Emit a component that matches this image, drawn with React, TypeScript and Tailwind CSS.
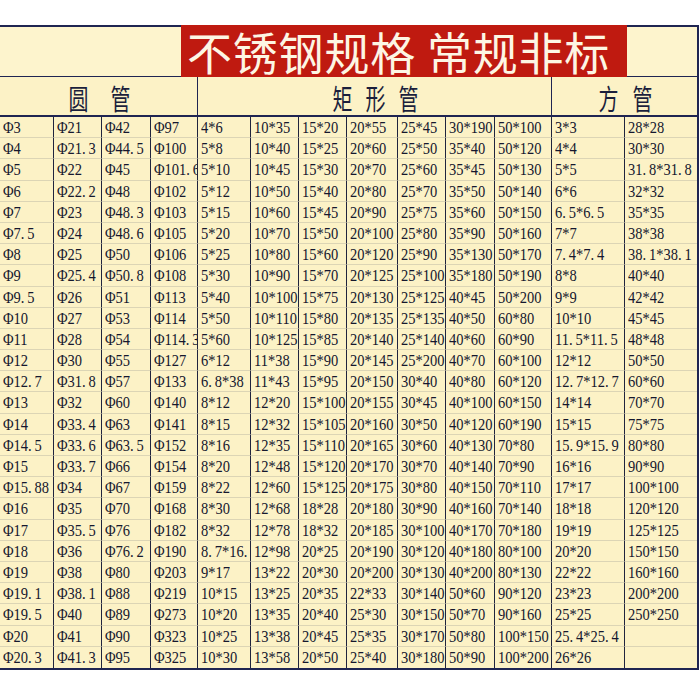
const round = [
  ["Φ3", "Φ4", "Φ5", "Φ6", "Φ7", "Φ7.5", "Φ8", "Φ9", "Φ9.5", "Φ10", "Φ11", "Φ12", "Φ12.7", "Φ13", "Φ14", "Φ14.5", "Φ15", "Φ15.88", "Φ16", "Φ17", "Φ18", "Φ19", "Φ19.1", "Φ19.5", "Φ20", "Φ20.3"],
  ["Φ21", "Φ21.3", "Φ22", "Φ22.2", "Φ23", "Φ24", "Φ25", "Φ25.4", "Φ26", "Φ27", "Φ28", "Φ30", "Φ31.8", "Φ32", "Φ33.4", "Φ33.6", "Φ33.7", "Φ34", "Φ35", "Φ35.5", "Φ36", "Φ38", "Φ38.1", "Φ40", "Φ41", "Φ41.3"],
  ["Φ42", "Φ44.5", "Φ45", "Φ48", "Φ48.3", "Φ48.6", "Φ50", "Φ50.8", "Φ51", "Φ53", "Φ54", "Φ55", "Φ57", "Φ60", "Φ63", "Φ63.5", "Φ66", "Φ67", "Φ70", "Φ76", "Φ76.2", "Φ80", "Φ88", "Φ89", "Φ90", "Φ95"],
  ["Φ97", "Φ100", "Φ101.6", "Φ102", "Φ103", "Φ105", "Φ106", "Φ108", "Φ113", "Φ114", "Φ114.3", "Φ127", "Φ133", "Φ140", "Φ141", "Φ152", "Φ154", "Φ159", "Φ168", "Φ182", "Φ190", "Φ203", "Φ219", "Φ273", "Φ323", "Φ325"],
];

const rect = [
  ["4*6", "5*8", "5*10", "5*12", "5*15", "5*20", "5*25", "5*30", "5*40", "5*50", "5*60", "6*12", "6.8*38", "8*12", "8*15", "8*16", "8*20", "8*22", "8*30", "8*32", "8.7*16.", "9*17", "10*15", "10*20", "10*25", "10*30"],
  ["10*35", "10*40", "10*45", "10*50", "10*60", "10*70", "10*80", "10*90", "10*100", "10*110", "10*125", "11*38", "11*43", "12*20", "12*32", "12*35", "12*48", "12*60", "12*68", "12*78", "12*98", "13*22", "13*25", "13*35", "13*38", "13*58"],
  ["15*20", "15*25", "15*30", "15*40", "15*45", "15*50", "15*60", "15*70", "15*75", "15*80", "15*85", "15*90", "15*95", "15*100", "15*105", "15*110", "15*120", "15*125", "18*28", "18*32", "20*25", "20*30", "20*35", "20*40", "20*45", "20*50"],
  ["20*55", "20*60", "20*70", "20*80", "20*90", "20*100", "20*120", "20*125", "20*130", "20*135", "20*140", "20*145", "20*150", "20*155", "20*160", "20*165", "20*170", "20*175", "20*180", "20*185", "20*190", "20*200", "22*33", "25*30", "25*35", "25*40"],
  ["25*45", "25*50", "25*60", "25*70", "25*75", "25*80", "25*90", "25*100", "25*125", "25*135", "25*140", "25*200", "30*40", "30*45", "30*50", "30*60", "30*70", "30*80", "30*90", "30*100", "30*120", "30*130", "30*140", "30*150", "30*170", "30*180"],
  ["30*190", "35*40", "35*45", "35*50", "35*60", "35*90", "35*130", "35*180", "40*45", "40*50", "40*60", "40*70", "40*80", "40*100", "40*120", "40*130", "40*140", "40*150", "40*160", "40*170", "40*180", "40*200", "50*60", "50*70", "50*80", "50*90"],
  ["50*100", "50*120", "50*130", "50*140", "50*150", "50*160", "50*170", "50*190", "50*200", "60*80", "60*90", "60*100", "60*120", "60*150", "60*190", "70*80", "70*90", "70*110", "70*140", "70*180", "80*100", "80*130", "90*120", "90*160", "100*150", "100*200"],
];

const square = [
  ["3*3", "4*4", "5*5", "6*6", "6.5*6.5", "7*7", "7.4*7.4", "8*8", "9*9", "10*10", "11.5*11.5", "12*12", "12.7*12.7", "14*14", "15*15", "15.9*15.9", "16*16", "17*17", "18*18", "19*19", "20*20", "22*22", "23*23", "25*25", "25.4*25.4", "26*26"],
  ["28*28", "30*30", "31.8*31.8", "32*32", "35*35", "38*38", "38.1*38.1", "40*40", "42*42", "45*45", "48*48", "50*50", "60*60", "70*70", "75*75", "80*80", "90*90", "100*100", "120*120", "125*125", "150*150", "160*160", "200*200", "250*250", "", ""],
];

const columns = [...round, ...rect, ...square];
const rowCount = 26;

// periods are half-width in the original sheet font, so give them room
const Cell = ({ text }: { text: string }) => {
  const parts = text.split(".");
  return (
    <span className="inline-block origin-center scale-y-[1.22]">
      {parts.map((p, i) => (
        <span key={i}>
          {p}
          {i < parts.length - 1 && <span className="inline-block w-[6.5px]">.</span>}
        </span>
      ))}
    </span>
  );
};

const HeadChars = ({ chars, gap }: { chars: string[]; gap: string }) => (
  <div className={`flex items-center justify-center ${gap}`}>
    {chars.map((c, i) => (
      <span key={i} className="inline-block w-[24px] text-center text-[25px] font-normal leading-none scale-x-[0.8] scale-y-[1.15] text-[#1b1f3c]">
        {c}
      </span>
    ))}
  </div>
);

export default function App() {
  const rows = Array.from({ length: rowCount }, (_, r) => columns.map((col) => col[r]));

  return (
    <div className="w-[700px] h-[700px] bg-white pt-[25px] font-['Liberation_Serif','Noto_Sans_CJK_SC',serif]">
      <div className="w-[699px] border-t-2 border-r-2 border-b-2 border-[#1f2552] bg-[#fcf2c6]">
        {/* title row with the red banner */}
        <div className="flex h-[50px] border-b-[1.5px] border-[#1f2552] bg-[#fdf4cd]">
          <div className="w-[181px]" />
          <div className="-mt-[2px] flex h-[52px] w-[446px] items-center bg-[#bf1a10] pl-[6px] font-['Noto_Sans_CJK_SC',sans-serif] text-[45px] font-normal leading-none tracking-[0.8px] text-[#fdf6e4]">
            不锈钢规格 常规非标
          </div>
        </div>

        {/* section headers */}
        <div className="grid h-[40px] grid-cols-[198px_354px_1fr] border-b-2 border-[#1f2552] font-['Noto_Sans_CJK_SC',sans-serif]">
          <div className="flex items-center justify-center border-r-[1.5px] border-[#1f2552] pt-[3px]">
            <HeadChars chars={["圆", "管"]} gap="gap-[18px]" />
          </div>
          <div className="flex items-center justify-center border-r-[1.5px] border-[#1f2552] pt-[3px]">
            <HeadChars chars={["矩", "形", "管"]} gap="gap-[9px]" />
          </div>
          <div className="flex items-center justify-center pt-[3px]">
            <HeadChars chars={["方", "管"]} gap="gap-[10px]" />
          </div>
        </div>

        {/* data */}
        <div className="grid grid-cols-[54px_48px_49px_47px_53px_48px_48px_51px_48px_49px_57px_73px_72px]">
          {rows.map((row, r) =>
            row.map((cell, c) => (
              <div
                key={`${r}-${c}`}
                className={`h-[21.2px] overflow-hidden whitespace-nowrap pl-[3px] text-[14.5px] leading-[21px] text-[#15172e] ${
                  c < 12 ? "border-r-[1.5px] border-r-[#20243e]" : ""
                } ${r < rowCount - 1 ? "border-b border-b-[#dcd5b5]" : ""}`}
              >
                <Cell text={cell} />
              </div>
            ))
          )}
        </div>
      </div>
    </div>
  );
}
